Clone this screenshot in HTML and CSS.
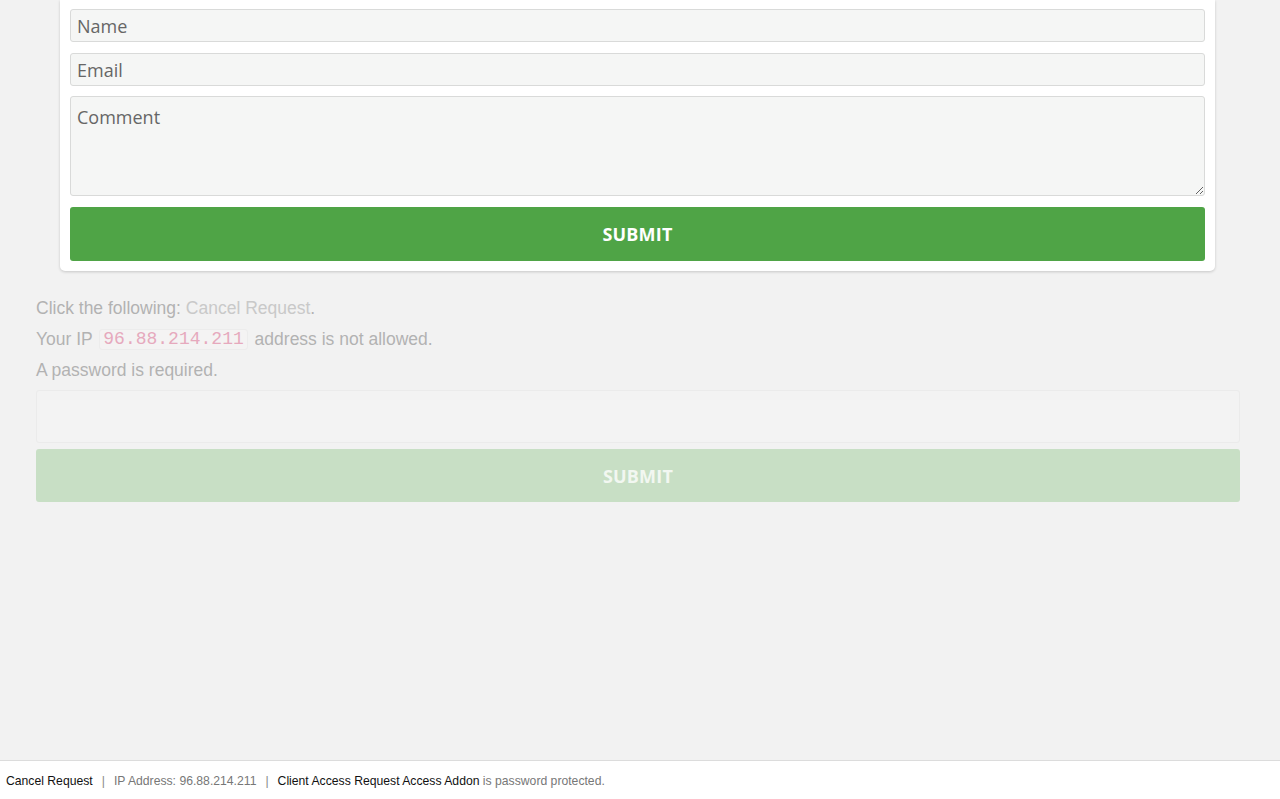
FILE: index.html
```html
<!DOCTYPE html>
<html lang="en">
<head>
<meta charset="utf-8">
<title>Access Request</title>
<link rel="stylesheet" href="styles.css">
</head>
<body>
<main class="page">
  <section class="card">
    <form class="form">
      <input class="field" type="text" placeholder="Name">
      <input class="field" type="email" placeholder="Email">
      <textarea class="field area" placeholder="Comment"></textarea>
      <button type="button" class="btn">SUBMIT</button>
    </form>
  </section>
  <div class="faded">
    <p class="line">Click the following: <a class="link" href="#">Cancel Request</a>.</p>
    <p class="line">Your IP <code class="ip">96.88.214.211</code> address is not allowed.</p>
    <p class="line last">A password is required.</p>
    <input class="pw" type="password">
    <button type="button" class="btn btn-faded">SUBMIT</button>
  </div>
</main>
<footer class="footer">
  <span class="dark">Cancel Request</span><span class="sep">|</span><span class="muted">IP Address: 96.88.214.211</span><span class="sep">|</span><span class="dark">Client Access Request Access Addon</span><span class="muted"> is password protected.</span>
</footer>
</body>
</html>
```
FILE: styles.css
```css
* { box-sizing: border-box; }
html, body { margin: 0; padding: 0; }
body {
  background: #f2f2f2;
  font-family: "Liberation Sans", Arial, sans-serif;
  height: 799px;
  display: flex;
  flex-direction: column;
  overflow: hidden;
}
.page {
  flex: 1;
  padding: 0 40px 0 36px;
}
.card {
  background: #fff;
  margin: 0 25px 0 24px;
  padding: 9px 10px 10px;
  border-radius: 0 0 5px 5px;
  box-shadow: 0 1px 3px rgba(0,0,0,0.18);
}
.form {
  display: flex;
  flex-direction: column;
  gap: 11px;
}
.field {
  display: block;
  width: 100%;
  height: 33px;
  margin: 0;
  padding: 4px 6px;
  font-family: "Open Sans", sans-serif;
  font-size: 18px;
  color: #555;
  background: #f5f6f5;
  border: 1px solid #d9dad9;
  border-radius: 3px;
  outline: none;
}
.field::placeholder { color: #666; }
.area {
  height: 100px;
  margin-top: -1px;
  padding-top: 8px;
  resize: vertical;
}
.btn {
  display: block;
  width: 100%;
  height: 54px;
  border: 0;
  border-radius: 3px;
  background: #4fa446;
  color: #fff;
  font-family: "Open Sans", sans-serif;
  font-weight: 700;
  font-size: 18px;
  letter-spacing: 0.2px;
  cursor: pointer;
}
.faded {
  padding-top: 27px;
}
.line {
  margin: 0 0 10px;
  font-size: 17.5px;
  line-height: 21px;
  color: #b2b2b2;
}
.line.last { margin-bottom: 9px; }
.link { color: #c9c9c9; text-decoration: none; }
.ip {
  display: inline-block;
  line-height: 19px;
  vertical-align: top;
  margin: 0 2px;
  font-family: "Liberation Mono", "DejaVu Sans Mono", monospace;
  font-size: 18px;
  color: #e6a9bd;
  background: #f4f3f3;
  border: 1px solid #ececec;
  border-radius: 3px;
  padding: 0 3px;
}
.pw {
  display: block;
  width: 100%;
  height: 53px;
  margin: 0 0 6px;
  background: #f3f3f3;
  border: 1px solid #ebebeb;
  border-radius: 3px;
  outline: none;
}
.btn-faded {
  height: 53px;
  background: #c8dfc5;
  color: #f2f7f1;
}
.footer {
  height: 39px;
  background: #fff;
  border-top: 1px solid #dcdcdc;
  padding: 12px 6px 0;
  font-size: 12.2px;
  line-height: 16px;
  color: #000;
}
.sep { color: #888; margin: 0 9px; }
.muted { color: #777; }
.dark { color: #111; }
```
